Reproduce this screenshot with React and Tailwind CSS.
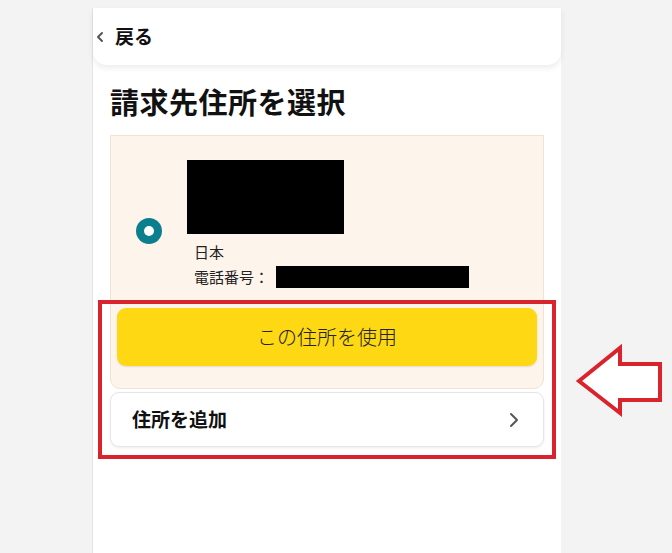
export default function App() {
  const jp = { fontFamily: '"Noto Sans CJK JP", "Noto Sans", sans-serif' };
  return (
    <div className="relative w-[672px] h-[553px] overflow-hidden bg-[#f3f3f3]" style={jp}>
      <div className="ml-[92px] mt-[8px] w-[469px] h-[545px] bg-white border-l border-[#e4e4e4] flex flex-col">
        {/* header */}
        <div className="h-[57px] rounded-b-[14px] bg-white shadow-[0_3px_6px_rgba(0,0,0,0.08)] flex items-center">
          <svg width="10" height="12" viewBox="0 0 10 12" className="ml-[2px]">
            <path d="M7 2 L3 6 L7 10" fill="none" stroke="#555" strokeWidth="2" strokeLinecap="round" strokeLinejoin="round" />
          </svg>
          <span className="ml-[10px] text-[19px] font-bold text-[#111] leading-none -mt-[2px]">戻る</span>
        </div>
        <div className="px-[17px]">
          <h1 className="mt-[18px] text-[29px] font-bold leading-[36px] text-[#111] tracking-[0.5px]">請求先住所を選択</h1>
          {/* address card */}
          <div className="mt-[16px] bg-[#fdf4ec] border border-[#f0e2d4] rounded-b-[10px] px-[6px] pt-[24px] pb-[22px]">
            <div className="flex items-center pl-[19px]">
              <div className="w-[26px] h-[26px] rounded-full bg-[#0b7f8e] flex items-center justify-center mt-[12px]">
                <div className="w-[10px] h-[10px] rounded-full bg-white" />
              </div>
              <div className="ml-[25px] flex flex-col">
                <div className="w-[157px] h-[74px] bg-black" />
                <div className="pl-[7px] mt-[5px] text-[15px] leading-[25px] text-[#222]">日本</div>
                <div className="pl-[7px] flex items-center text-[15px] leading-[25px] text-[#222]">
                  <span>電話番号：</span>
                  <div className="ml-[7px] w-[193px] h-[22px] bg-black" />
                </div>
              </div>
            </div>
            <button className="mt-[19px] w-full h-[58px] rounded-[9px] bg-[#fdd813] shadow-[0_1px_2px_rgba(0,0,0,0.1)] text-[20px] font-light text-[#222] flex items-center justify-center">
              この住所を使用
            </button>
          </div>
          {/* add address */}
          <div className="mt-[3px] h-[55px] rounded-[9px] bg-white border border-[#e6e6e6] shadow-[0_1px_3px_rgba(0,0,0,0.08)] flex items-center justify-between pl-[21px] pr-[24px]">
            <span className="text-[19px] font-bold text-[#111]">住所を追加</span>
            <svg width="10" height="16" viewBox="0 0 10 16">
              <path d="M2 2 L8 8 L2 14" fill="none" stroke="#555" strokeWidth="2" strokeLinecap="round" strokeLinejoin="round" />
            </svg>
          </div>
        </div>
      </div>
      {/* annotation: red box */}
      <div className="absolute left-[98px] top-[300px] w-[458px] h-[159px] border-[4px] border-[#d9232d]" />
      {/* annotation: arrow */}
      <svg className="absolute left-[570px] top-[340px]" width="100" height="82" viewBox="570 340 100 82">
        <polygon points="579,381 620,348 620,364 660,364 660,400 620,400 620,413" fill="#fff" stroke="#d9232d" strokeWidth="4" strokeLinejoin="miter" />
      </svg>
    </div>
  );
}
